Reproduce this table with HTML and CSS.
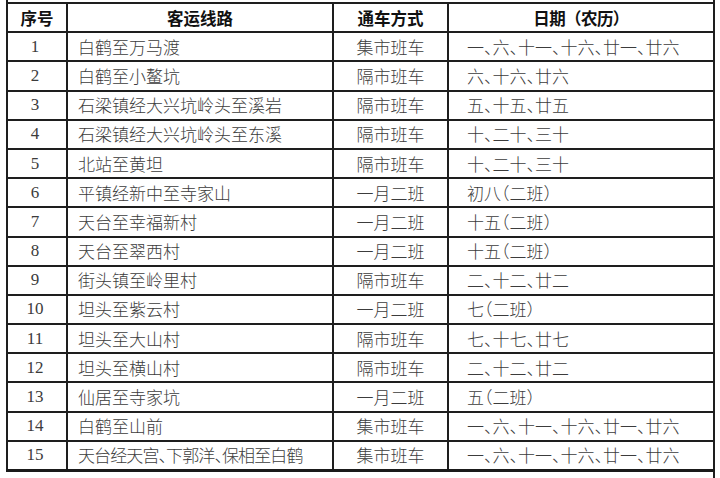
FILE: index.html
```html
<!DOCTYPE html>
<html lang="zh-CN">
<head>
<meta charset="utf-8">
<title>客运线路</title>
<link rel="stylesheet" href="styles.css">
</head>
<body>
<table class="routes">
  <colgroup>
    <col class="c-no"><col class="c-route"><col class="c-mode"><col class="c-date">
  </colgroup>
  <tr class="cut"><td colspan="4"></td></tr>
  <tr class="head">
    <th>序号</th><th>客运线路</th><th>通车方式</th><th>日期（农历）</th>
  </tr>
  <tr><td class="no">1</td><td class="route">白鹤至万马渡</td><td class="mode">集市班车</td><td class="date">一、六、十一、十六、廿一、廿六</td></tr>
  <tr><td class="no">2</td><td class="route">白鹤至小鳌坑</td><td class="mode">隔市班车</td><td class="date">六、十六、廿六</td></tr>
  <tr><td class="no">3</td><td class="route">石梁镇经大兴坑岭头至溪岩</td><td class="mode">隔市班车</td><td class="date">五、十五、廿五</td></tr>
  <tr><td class="no">4</td><td class="route">石梁镇经大兴坑岭头至东溪</td><td class="mode">隔市班车</td><td class="date">十、二十、三十</td></tr>
  <tr><td class="no">5</td><td class="route">北站至黄坦</td><td class="mode">隔市班车</td><td class="date">十、二十、三十</td></tr>
  <tr><td class="no">6</td><td class="route">平镇经新中至寺家山</td><td class="mode">一月二班</td><td class="date">初八（二班）</td></tr>
  <tr><td class="no">7</td><td class="route">天台至幸福新村</td><td class="mode">一月二班</td><td class="date">十五（二班）</td></tr>
  <tr><td class="no">8</td><td class="route">天台至翠西村</td><td class="mode">一月二班</td><td class="date">十五（二班）</td></tr>
  <tr><td class="no">9</td><td class="route">街头镇至岭里村</td><td class="mode">隔市班车</td><td class="date">二、十二、廿二</td></tr>
  <tr><td class="no">10</td><td class="route">坦头至紫云村</td><td class="mode">一月二班</td><td class="date">七（二班）</td></tr>
  <tr><td class="no">11</td><td class="route">坦头至大山村</td><td class="mode">隔市班车</td><td class="date">七、十七、廿七</td></tr>
  <tr><td class="no">12</td><td class="route">坦头至横山村</td><td class="mode">隔市班车</td><td class="date">二、十二、廿二</td></tr>
  <tr><td class="no">13</td><td class="route">仙居至寺家坑</td><td class="mode">一月二班</td><td class="date">五（二班）</td></tr>
  <tr><td class="no">14</td><td class="route">白鹤至山前</td><td class="mode">集市班车</td><td class="date">一、六、十一、十六、廿一、廿六</td></tr>
  <tr class="last"><td class="no">15</td><td class="route tight">天台经天宫、下郭洋、保相至白鹤</td><td class="mode">集市班车</td><td class="date">一、六、十一、十六、廿一、廿六</td></tr>
  <tr class="tail"><td colspan="4"></td></tr>
</table>
</body>
</html>
```

FILE: styles.css
```css
html, body {
  margin: 0;
  padding: 0;
  background: #ffffff;
}

body {
  width: 720px;
  height: 478px;
  overflow: hidden;
}

.routes {
  margin-left: 6px;
  width: 707px;
  border-collapse: collapse;
  table-layout: fixed;
  font-family: "Liberation Serif", "Noto Sans CJK SC", serif;
  color: #3c3c3c;
}

.c-no { width: 60px; }
.c-route { width: 266px; }
.c-mode { width: 115px; }
.c-date { width: 266px; }

.routes td,
.routes th {
  border: 2px solid #1e1e1e;
  height: 29.2px;
  padding: 0;
  box-sizing: border-box;
  font-size: 17px;
  line-height: 20px;
  white-space: nowrap;
  overflow: hidden;
  font-feature-settings: "halt";
}

.routes tr.cut td {
  height: 3px;
  border-top: none;
  border-bottom: 2px solid #1e1e1e;
}

.routes tr.tail td {
  height: 9px;
  border-left: none;
  border-bottom: none;
  border-top: 3px solid #1a1a1a;
}

.routes .head th {
  font-family: "Noto Sans CJK SC", sans-serif;
  font-weight: 700;
  font-size: 16.5px;
  color: #111111;
  text-align: center;
  font-feature-settings: normal;
}

.routes .head th:last-child {
  letter-spacing: -0.6px;
}

.no {
  text-align: center;
  padding-right: 4px !important;
  font-size: 17px;
}

.route {
  text-align: left;
  padding-left: 10px !important;
  font-family: "Noto Sans CJK SC", sans-serif;
  font-weight: 300;
}

.route.tight {
  letter-spacing: -0.9px;
}

.mode {
  text-align: center;
  font-family: "Noto Sans CJK SC", sans-serif;
  font-weight: 300;
}

.date {
  text-align: left;
  padding-left: 18px !important;
  font-family: "Noto Sans CJK SC", sans-serif;
  font-weight: 300;
}
```
